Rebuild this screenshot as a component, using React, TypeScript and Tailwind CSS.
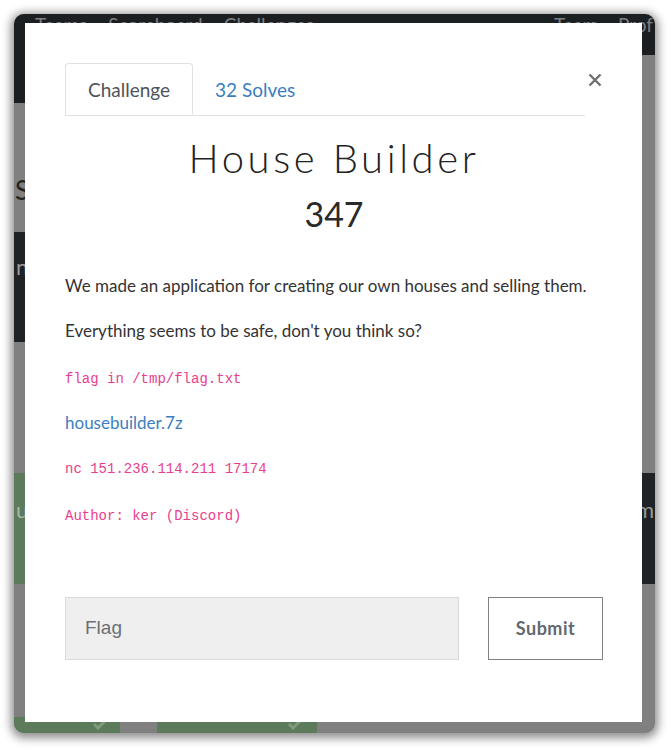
import React from "react";

function Check() {
  return (
    <svg width="16" height="12" viewBox="0 0 16 12" className="text-[#7f9a7f]">
      <path d="M2 6 L6 10 L14 2" fill="none" stroke="currentColor" strokeWidth="3" />
    </svg>
  );
}

export default function App() {
  return (
    <div className="w-[668px] h-[748px] bg-white p-[14px] font-['Lato',sans-serif]">
      {/* screenshot frame with dimmed page behind the modal */}
      <div className="relative w-[641px] h-[719px] rounded-[10px] overflow-hidden bg-[#808080] shadow-[0_2px_10px_3px_rgba(0,0,0,0.45)] flex flex-col">
        <div className="h-[41px] shrink-0 bg-[#1c1f22] flex justify-between text-[19px] leading-none text-[#7d8084] pl-[21px] pr-[2px] pt-[1px]">
          <div className="flex gap-[21px]">
            <span>Teams</span>
            <span>Scoreboard</span>
            <span>Challenges</span>
          </div>
          <div className="flex gap-[20px]">
            <span>Team</span>
            <span>Prof</span>
          </div>
        </div>
        <div className="h-[48px] shrink-0 flex">
          <div className="w-[40px] bg-[#1c1f22]" />
        </div>
        <div className="h-[129px] shrink-0 flex items-end pb-[22px] pl-[1px] text-[26px] text-[#222]">
          S
        </div>
        <div className="h-[110px] shrink-0 flex">
          <div className="w-[300px] bg-[#1f2326] text-[#999] text-[22px] pl-[2px] pt-[18px]">n</div>
        </div>
        <div className="h-[131px] shrink-0" />
        <div className="h-[111px] shrink-0 flex justify-between">
          <div className="w-[300px] bg-[#5b7b5a] text-[#a9b6a8] text-[22px] pt-[20px] pl-[2px]">u</div>
          <div className="w-[300px] bg-[#1f2326] text-[#999] text-[22px] pt-[20px] flex justify-end pr-[1px]">m</div>
        </div>
        <div className="h-[133px] shrink-0" />
        <div className="h-[16px] shrink-0 flex">
          <div className="w-[106px] bg-[#5b7b5a] flex justify-end items-start pr-[12px] pt-[1px]">
            <Check />
          </div>
          <div className="w-[37px]" />
          <div className="w-[160px] bg-[#5b7b5a] flex justify-end items-start pr-[14px] pt-[1px]">
            <Check />
          </div>
        </div>

        {/* modal */}
        <div className="absolute left-[11px] top-[9px] w-[617px] h-[699px] bg-white pt-[40px] pl-[40px] pr-[39px]">
          <button className="absolute left-[563px] top-[50px] w-[14px] h-[14px]">
            <svg width="14" height="14" viewBox="0 0 14 14">
              <path d="M1.5 1.5 L12.5 12.5 M12.5 1.5 L1.5 12.5" stroke="#6f6f6f" strokeWidth="2.4" />
            </svg>
          </button>
          <div className="w-[520px] flex border-b border-[#dee2e6] text-[19px] leading-[24px]">
            <div className="h-[52px] w-[128px] -mb-px bg-white border border-[#dee2e6] border-b-white rounded-t-[4px] flex items-center justify-center pt-[1px] text-[#4f5458]">
              Challenge
            </div>
            <div className="h-[52px] px-[22px] flex items-center pt-[1px] text-[#3a80c0]">32 Solves</div>
          </div>
          <h2 className="mt-[18px] text-center text-[40px] leading-[48px] font-light tracking-[3.6px] text-[#222]">
            House Builder
          </h2>
          <h3 className="mt-[10px] text-center text-[34px] leading-[44px] text-[#2a2a2a]">347</h3>
          <div className="mt-[37px] text-[17px] leading-[26px] text-[#333]">
            <p className="mb-[19px]">We made an application for creating our own houses and selling them.</p>
            <p className="mb-[22px]">Everything seems to be safe, don't you think so?</p>
            <p className="mb-[18px] font-['Liberation_Mono',monospace] text-[14px] text-[#e83e8c]">flag in /tmp/flag.txt</p>
            <p className="mb-[20px] text-[#3a80c0]">housebuilder.7z</p>
            <p className="mb-[21px] font-['Liberation_Mono',monospace] text-[14px] text-[#e83e8c]">nc 151.236.114.211 17174</p>
            <p className="font-['Liberation_Mono',monospace] text-[14px] text-[#e83e8c]">Author: ker (Discord)</p>
          </div>
          <div className="mt-[68px] flex justify-between">
            <div className="w-[394px] h-[63px] bg-[#efefef] border border-[#d8dadd] flex items-center pl-[19px] font-['Liberation_Sans',sans-serif] text-[19px] text-[#6c6f73]">
              Flag
            </div>
            <button className="w-[115px] h-[63px] bg-white border border-[#7d8287] text-[18px] font-bold text-[#61686e] tracking-[0.5px]">
              Submit
            </button>
          </div>
        </div>
      </div>
    </div>
  );
}
